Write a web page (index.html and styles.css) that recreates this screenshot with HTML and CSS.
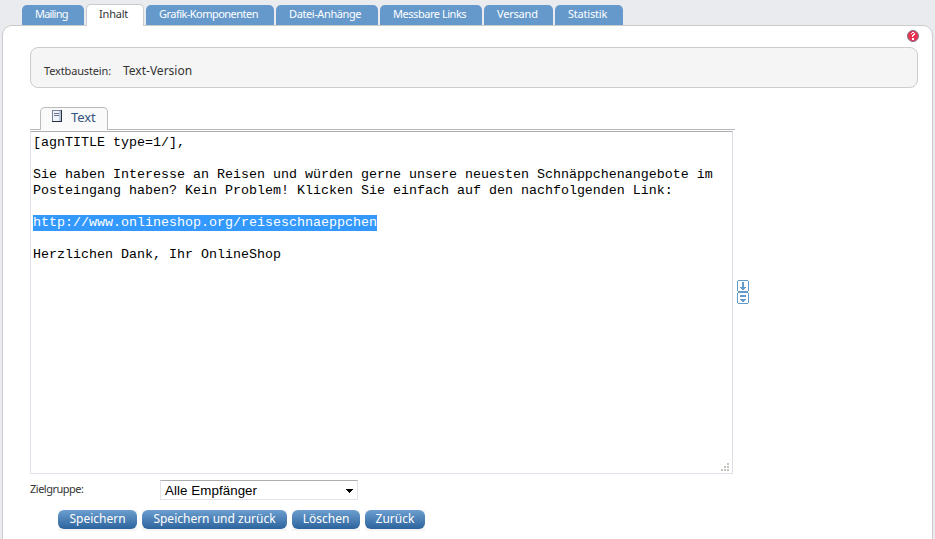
FILE: index.html
```html
<!DOCTYPE html>
<html lang="de">
<head>
<meta charset="utf-8">
<title>Mailing</title>
<link rel="stylesheet" href="styles.css">
</head>
<body>
<nav class="tabs">
  <a class="tab mailing">Mailing</a>
  <a class="tab active">Inhalt</a>
  <a class="tab components">Grafik-Komponenten</a>
  <a class="tab files">Datei-Anhänge</a>
  <a class="tab links">Messbare Links</a>
  <a class="tab send">Versand</a>
  <a class="tab stats">Statistik</a>
</nav>
<main class="panel">
  <div class="help-row">
    <svg class="help" width="12" height="12" viewBox="0 0 12 12"><circle cx="6" cy="6" r="5.5" fill="#ea3350" stroke="#7c7486"/><path d="M4 4V3h1V2h2v1h1v2H7v1H6v1H5V5h1V4h1V3H5v1zM5 8h2v2H5z" fill="#fff" shape-rendering="crispEdges"/></svg>
  </div>
  <section class="info">
    <span class="info-label">Textbaustein:</span>
    <span class="info-value">Text-Version</span>
  </section>
  <section class="editor">
    <div class="editor-tabs">
      <div class="editor-tab">
        <svg width="10" height="12" viewBox="0 0 10 12" shape-rendering="crispEdges"><path d="M0 0h10v12H0z" fill="#74829b"/><path d="M1 1h7v10H1z" fill="#f0f3f9"/><path d="M7 1h2v10H7z" fill="#b9c6dc"/><path d="M9 0h1v12H9zM0 11h10v1H0z" fill="#262d3d"/><path d="M2 3h5v1H2zM2 5h5v1H2z" fill="#66748d"/></svg>
        <span class="editor-tab-name">Text</span>
      </div>
    </div>
    <div class="editor-row">
      <div class="textarea"><pre class="code">[agnTITLE type=1/],

Sie haben Interesse an Reisen und würden gerne unsere neuesten Schnäppchenangebote im
Posteingang haben? Kein Problem! Klicken Sie einfach auf den nachfolgenden Link:

<span class="selected">http://www.onlineshop.org/reiseschnaeppchen</span>

Herzlichen Dank, Ihr OnlineShop</pre>
        <svg class="grip" width="9" height="9" viewBox="0 0 9 9" shape-rendering="crispEdges"><path d="M6 0h2v2H6zM3 3h2v2H3zM6 3h2v2H6zM0 6h2v2H0zM3 6h2v2H3zM6 6h2v2H6z" fill="#c4c4c0"/></svg>
      </div>
      <svg class="resize" width="12" height="24" viewBox="0 0 12 24" shape-rendering="crispEdges"><path d="M1 0h10v1H1zM0 1h1v10H0zM11 1h1v10h-1zM1 11h10v2H1zM0 13h1v10H0zM11 13h1v10h-1zM1 23h10v1H1zM5 2h2v5h2v1H8v1H7v1H5V9H4V8H3V7h2zM3 15h6v2H3zM3 19h6v1H8v1H7v1H5v-1H4v-1H3z" fill="#629acb"/></svg>
    </div>
  </section>
  <div class="target">
    <label class="target-label">Zielgruppe:</label>
    <div class="select"><span>Alle Empfänger</span><svg width="7" height="4" viewBox="0 0 7 4" shape-rendering="crispEdges"><path d="M0 0h7v1H6v1H5v1H4v1H3V3H2V2H1V1H0z"/></svg></div>
  </div>
  <div class="actions">
    <div class="button-wrap"><button class="button save">Speichern</button></div>
    <div class="button-wrap"><button class="button save-back">Speichern und zurück</button></div>
    <div class="button-wrap"><button class="button delete">Löschen</button></div>
    <div class="button-wrap"><button class="button back">Zurück</button></div>
  </div>
</main>
</body>
</html>
```

FILE: styles.css
```css
* { box-sizing: border-box; }
body {
  margin: 0;
  height: 539px;
  overflow: hidden;
  background: #eaebef;
  font: 11px/14px "Noto Sans", sans-serif;
  color: #333;
}
.tabs {
  display: flex;
  align-items: flex-end;
  gap: 2px;
  height: 25px;
  padding-left: 22px;
}
.tab {
  height: 20px;
  padding: 2px 0 0 13px;
  border-radius: 5px 5px 0 0;
  background: #6699cb;
  color: #fff;
  white-space: nowrap;
}
.mailing { width: 62px; letter-spacing: -0.8px; }
.active {
  position: relative;
  width: 58px;
  height: 22px;
  margin-bottom: -1px;
  padding-left: 12px;
  border: 1px solid #ccc;
  border-bottom: 0;
  background: #fff;
  color: #333;
  letter-spacing: -0.2px;
}
.components { width: 128px; letter-spacing: -0.53px; }
.files { width: 102px; letter-spacing: -0.4px; }
.links { width: 102px; letter-spacing: -0.46px; }
.send { width: 69px; letter-spacing: -0.2px; }
.stats { width: 68px; letter-spacing: -0.2px; }
.panel {
  width: 931px;
  height: 540px;
  margin-left: 2px;
  padding: 0 14px 0 27px;
  border: 1px solid #ccc;
  border-radius: 10px 10px 0 0;
  background: #fff;
}
.help-row {
  display: flex;
  justify-content: flex-end;
  height: 21px;
  padding: 4px 0 0;
  margin-right: -1px;
}
.info {
  display: flex;
  align-items: baseline;
  width: 888px;
  height: 41px;
  padding: 16px 13px 0;
  border: 1px solid #ccc;
  border-radius: 8px;
  background: #f5f5f5;
}
.info-label { width: 79px; letter-spacing: -0.15px; }
.info-value { font-size: 12px; }
.editor { margin-top: 19px; }
.editor-tabs {
  width: 705px;
  height: 23px;
  padding-left: 10px;
  border-bottom: 1px solid #b8b8b8;
}
.editor-tab {
  display: flex;
  gap: 9px;
  width: 68px;
  height: 23px;
  padding: 2px 0 0 11px;
  border: 1px solid #bbb;
  border-bottom: 0;
  border-radius: 5px 5px 0 0;
  background: #fafafa;
  color: #33547f;
  font-size: 13px;
}
.editor-tab-name { letter-spacing: -0.1px; }
.editor-row { display: flex; align-items: center; gap: 4px; margin-top: 1px; }
.textarea {
  position: relative;
  width: 703px;
  height: 343px;
  padding: 3px 2px;
  border: 1px solid #e2e3ea;
  border-top-color: #abadb3;
  border-right-color: #dbdfe6;
}
.code {
  margin: 0;
  color: #000;
  font: 13.333px/16px "Liberation Mono", monospace;
}
.selected {
  display: inline-block;
  height: 16px;
  vertical-align: top;
  background: #3399ff;
  color: #fff;
}
.grip { position: absolute; right: 2px; bottom: 1px; }
.resize { margin-top: -22px; }
.target { display: flex; height: 26px; padding-top: 6px; }
.target-label { width: 130px; padding-top: 2px; letter-spacing: -0.5px; }
.select {
  display: flex;
  align-items: center;
  justify-content: space-between;
  width: 198px;
  height: 20px;
  padding: 1px 4px 0;
  border: 1px solid #e2e3ea;
  border-top-color: #abadb3;
  color: #000;
  font: 13.333px/16px "Liberation Sans", sans-serif;
  letter-spacing: 0.07px;
}
.actions { display: flex; gap: 5px; padding: 10px 0 0 28px; }
.button-wrap { height: 21px; background: #f5f5f5; }
.button {
  display: block;
  height: 19px;
  padding: 0 0 2px;
  border: 0;
  border-radius: 6px;
  background: linear-gradient(#6c9fd0, #2c639c);
  color: #fff;
  font: 12px/16px "Noto Sans", sans-serif;
  white-space: nowrap;
}
.save { width: 79px; }
.save-back { width: 145px; }
.delete { width: 68px; }
.back { width: 60px; }
```
